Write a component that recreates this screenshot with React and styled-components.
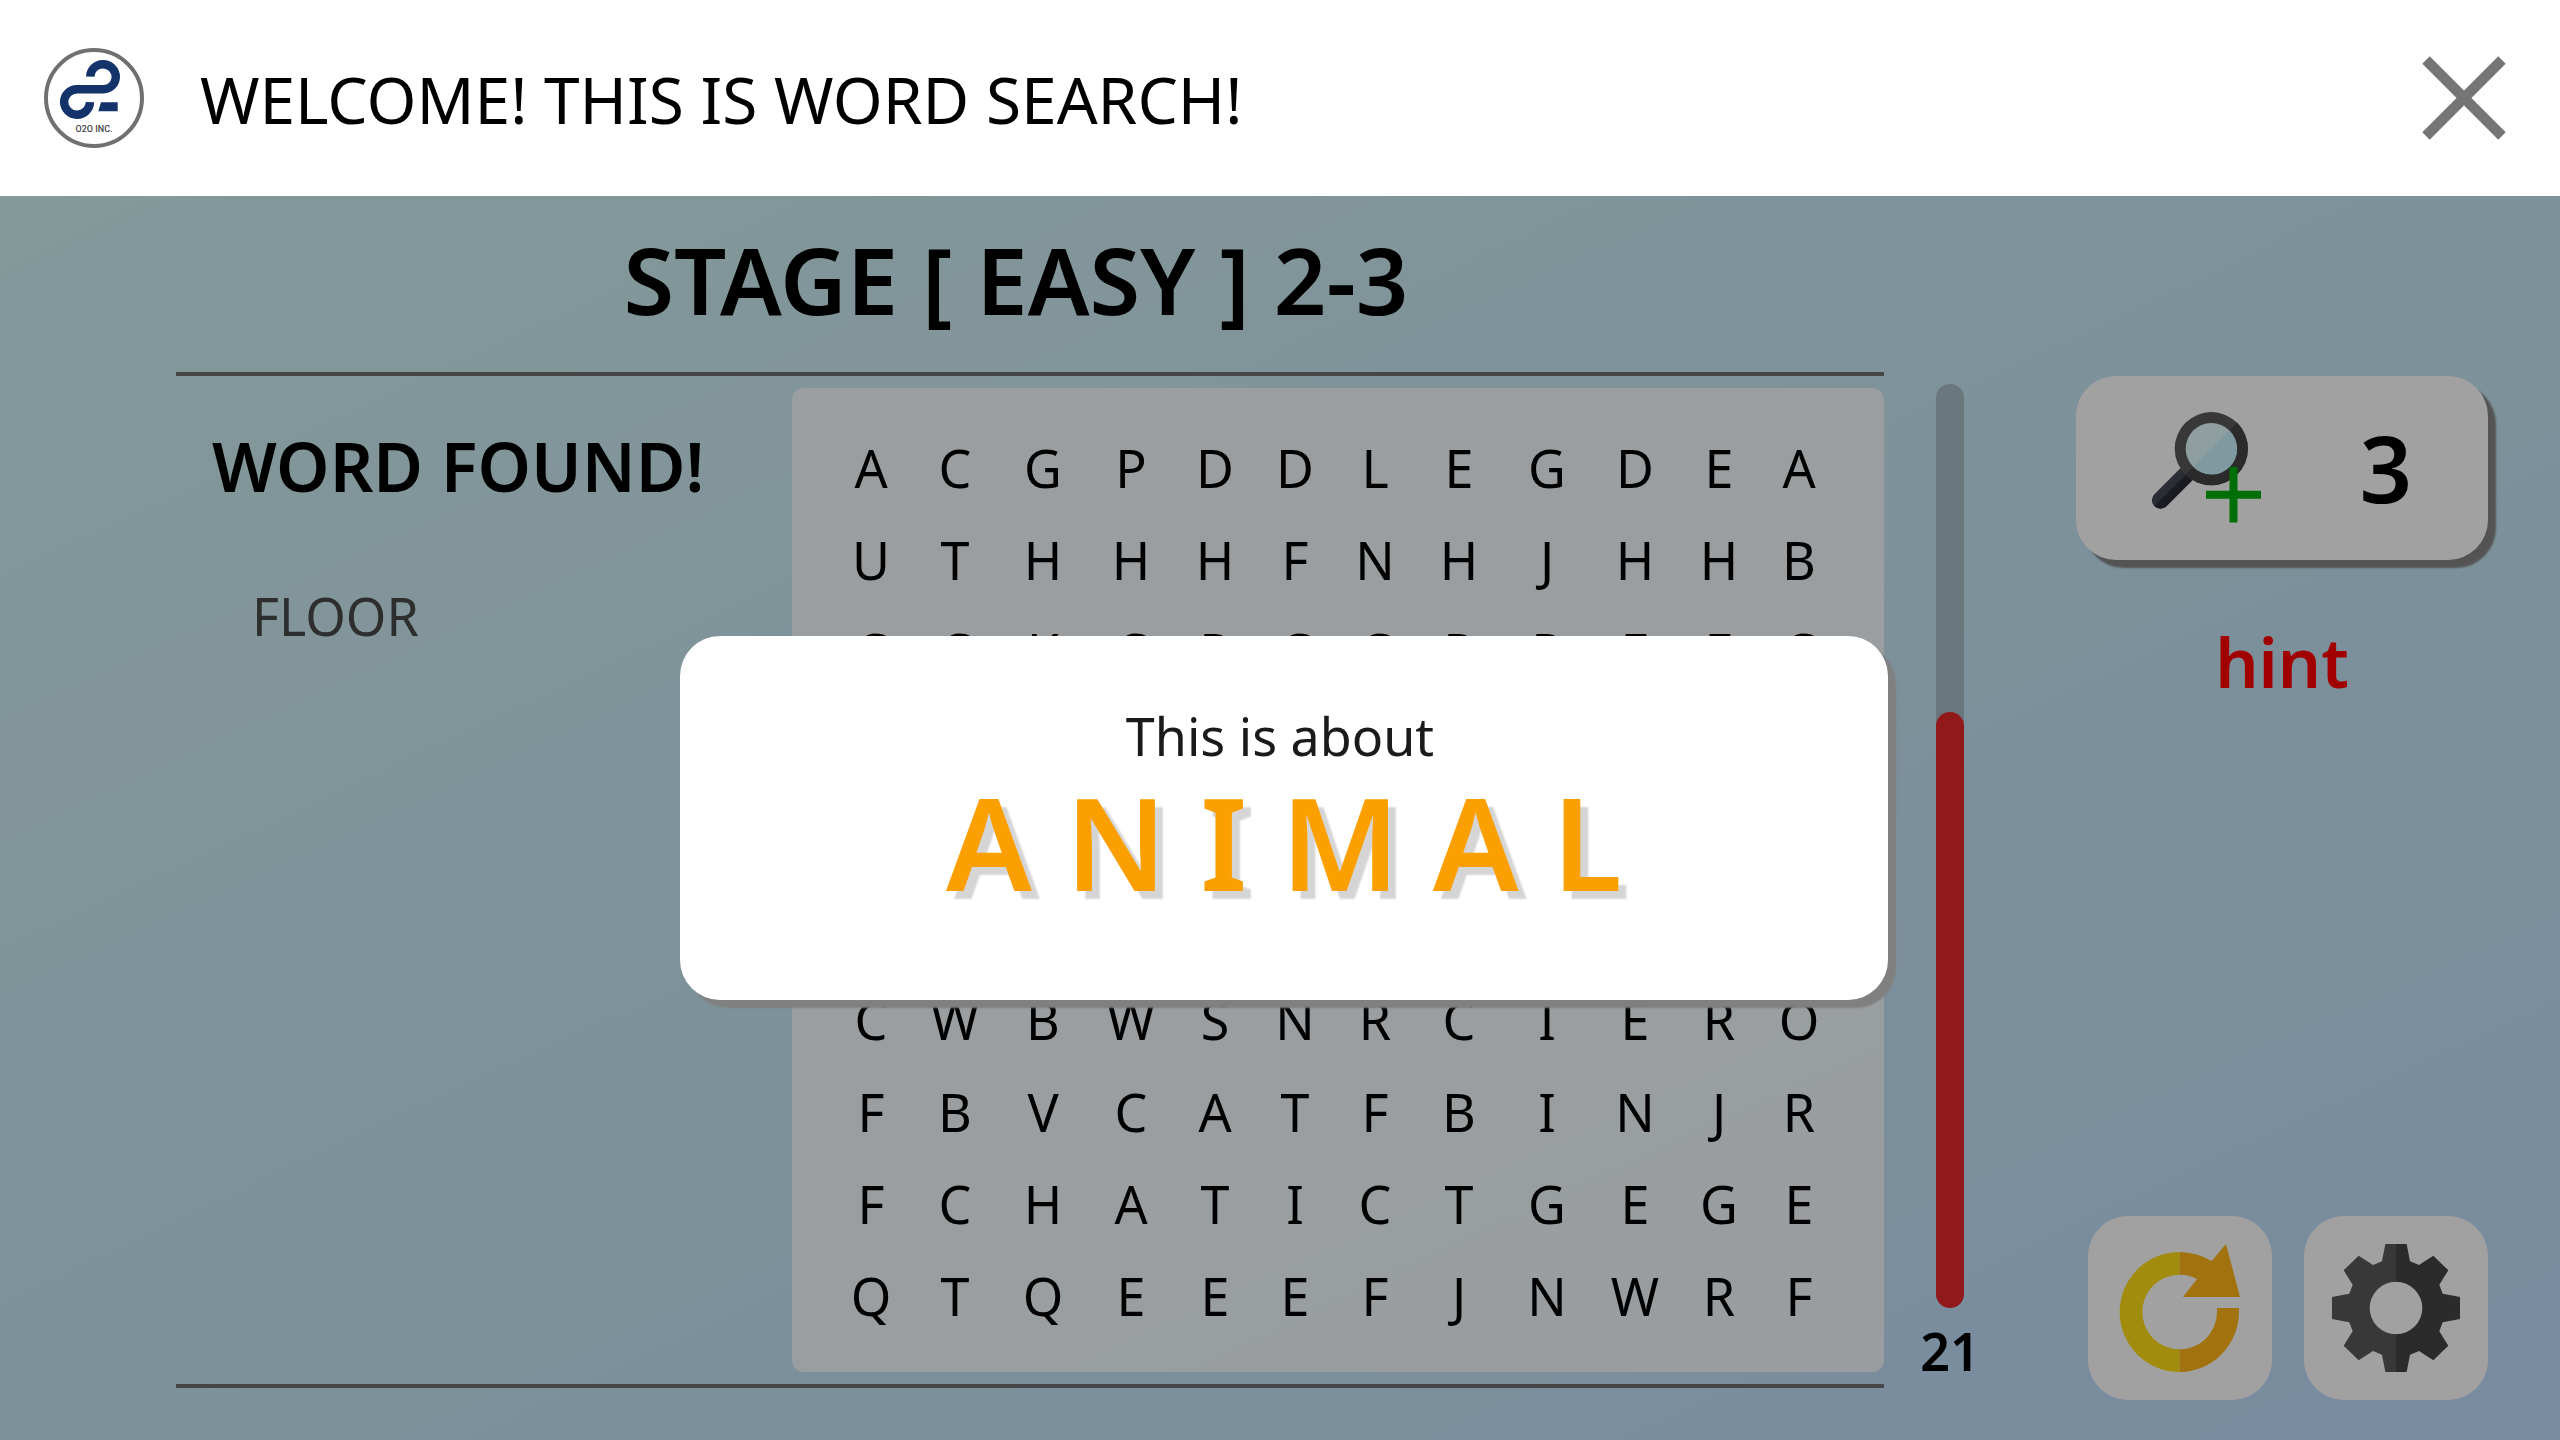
import React from "react";
import styled, { createGlobalStyle } from "styled-components";

const GlobalStyle = createGlobalStyle`
  *, *::before, *::after { box-sizing: border-box; }
  body {
    margin: 0;
    color: #000;
    font-family: "Noto Sans", "Open Sans", sans-serif;
  }
  h1, h2, p, ul { margin: 0; padding: 0; }
  button { font: inherit; color: inherit; border: 0; cursor: pointer; }
`;

const Page = styled.div`
  display: flex;
  flex-direction: column;
  min-height: 100vh;
`;

const Header = styled.header`
  display: flex;
  align-items: center;
  height: 196px;
  padding: 0 46px 0 44px;
  background: #fff;
`;

const LogoSvg = styled.svg`
  width: 100px;
  height: 100px;
  flex: none;
`;

const LogoText = styled.text`
  font-family: Roboto, sans-serif;
  font-size: 9px;
  font-weight: 500;
  fill: #444;
`;

const HeaderTitle = styled.h1`
  flex: 1;
  margin-left: 56px;
  padding-top: 4px;
  font-size: 64px;
  line-height: 88px;
  font-weight: 400;
`;

const CloseButton = styled.button`
  display: flex;
  padding: 4px;
  background: none;

  svg { width: 92px; height: 92px; }
`;

const Stage = styled.main`
  position: relative;
  flex: 1;
  display: grid;
  grid-template-columns: 1fr 192px 412px;
  padding: 0 72px 0 176px;
  background: linear-gradient(155deg, #d1f2f4, #c6e6f4 55%, #c0ddfd);
`;

const Play = styled.section`
  display: flex;
  flex-direction: column;
  padding-bottom: 52px;
`;

const StageTitle = styled.h2`
  height: 176px;
  padding-right: 28px;
  font-size: 92px;
  line-height: 168px;
  font-weight: 600;
  text-align: center;
`;

const Field = styled.div`
  flex: 1;
  display: grid;
  grid-template-columns: 22fr 39fr;
  border-top: 4px solid #707070;
  border-bottom: 4px solid #707070;
`;

const Found = styled.section`
  padding: 40px 0 0 36px;
`;

const FoundTitle = styled.h2`
  font-size: 68px;
  line-height: 100px;
  font-weight: 600;
  white-space: nowrap;
`;

const FoundList = styled.ul`
  margin-top: 64px;
  padding-left: 40px;
  list-style: none;
  font-size: 52px;
  line-height: 72px;
  color: #494949;
`;

const Board = styled.div`
  margin: 12px 0;
  padding: 34px 46px 30px 38px;
  border-radius: 12px;
  background: rgba(255, 255, 255, 0.8);
`;

const Letters = styled.table`
  width: 100%;
  table-layout: fixed;
  border-collapse: collapse;
  font-size: 52px;
  line-height: 72px;
`;

const Column = styled.col`
  width: ${(p) => p.$width}px;
`;

const Letter = styled.td`
  height: 92px;
  padding: 0;
  text-align: center;
`;

const Timer = styled.section`
  display: flex;
  flex-direction: column;
  align-items: center;
  width: 64px;
  margin-left: 34px;
  padding: 188px 0 46px;
`;

const TimerTrack = styled.div`
  flex: 1;
  display: flex;
  align-items: flex-end;
  width: 28px;
  border-radius: 14px;
  background: rgba(112, 112, 112, 0.35);
`;

const TimerFill = styled.div`
  width: 100%;
  border-radius: 14px;
  background: #e8292c;
`;

const TimerValue = styled.p`
  font-size: 52px;
  line-height: 86px;
  font-weight: 600;
`;

const Side = styled.aside`
  display: flex;
  flex-direction: column;
  padding: 180px 0 40px;
`;

const HintButton = styled.button`
  display: flex;
  align-items: center;
  justify-content: space-between;
  height: 184px;
  padding: 0 76px;
  border-radius: 40px;
  background: #fff;
  box-shadow: 8px 8px 2px #848484;
  font-size: 92px;
  line-height: 124px;
  font-weight: 600;

  svg { width: 112px; height: 112px; }
`;

const HintLabel = styled.p`
  margin-top: 52px;
  font-size: 68px;
  line-height: 100px;
  font-weight: 600;
  text-align: center;
  color: #ff0000;
`;

const Tools = styled.div`
  display: flex;
  justify-content: flex-end;
  gap: 32px;
  margin-top: auto;
`;

const ToolButton = styled.button`
  display: flex;
  align-items: center;
  justify-content: center;
  width: 184px;
  height: 184px;
  padding: 0;
  border-radius: 40px;
  background: #fff;

  svg { width: 128px; height: 128px; }
`;

const Overlay = styled.div`
  position: absolute;
  inset: 0;
  display: flex;
  align-items: center;
  justify-content: center;
  padding-left: 8px;
  background: rgba(0, 0, 0, 0.37);
`;

const Popup = styled.div`
  width: 1208px;
  max-width: 90%;
  padding: 64px 0 88px;
  border-radius: 40px;
  background: #fff;
  box-shadow: 8px 8px 2px #808080;
  text-align: center;
`;

const PopupLead = styled.p`
  padding-right: 8px;
  font-size: 52px;
  line-height: 72px;
  color: #1a1a1a;
`;

const PopupTopic = styled.p`
  font-size: 128px;
  line-height: 140px;
  font-weight: 600;
  color: #fc9f00;
  text-shadow: 8px 8px 2px #d5d5d5;
`;

const COLUMN_WIDTHS = [82, 86, 90, 86, 82, 78, 82, 86, 90, 86, 82, 78];

// Rows of spaces stay blank while the topic popup covers them.
const BLANK_ROW = " ".repeat(12);

const ROWS = [
  "ACGPDDLEGDEA",
  "UTHHHFNHJHHB",
  "CCKCPCCPPEEC",
  BLANK_ROW,
  BLANK_ROW,
  BLANK_ROW,
  "CWBWSNRCIERO",
  "FBVCATFBINJR",
  "FCHATICTGEGE",
  "QTQEEEFJNWRF",
];

const FOUND_WORDS = ["FLOOR"];
const TIME_LEFT_PERCENT = 64.5;

function Logo() {
  return (
    <LogoSvg viewBox="0 0 100 100" role="img" aria-label="O2O INC.">
      <circle cx="50" cy="50" r="48" fill="#fff" stroke="#707070" strokeWidth="4" />
      <path
        d="M46.2 28.7A12.8 12.8 0 0 1 59 16.2A12.8 12.8 0 0 1 71.8 29A12.3 12.3 0 0 1 59.5 41.2H33A12.9 12.9 0 0 0 20.1 54A12.9 12.9 0 0 0 33 66.7A12.9 12.9 0 0 0 46 54.2"
        fill="none"
        stroke="#14336b"
        strokeWidth="8.4"
      />
      <path d="M57 54.3H73.7V63.3H54.3Z" fill="#14336b" />
      <LogoText x="50" y="84" textAnchor="middle">O2O INC.</LogoText>
    </LogoSvg>
  );
}

function CloseIcon() {
  return (
    <svg viewBox="0 0 92 92" aria-hidden="true">
      <path d="M8 8L84 84M84 8L8 84" stroke="#757575" strokeWidth="10.5" />
    </svg>
  );
}

function HintIcon() {
  return (
    <svg viewBox="0 0 112 112" aria-hidden="true">
      <path d="M28.4 56.2L40.4 68.2L14.4 94.2A8.4 8.4 0 0 1 2.4 82.2Z" fill="#434851" />
      <path d="M34.4 62.2L40.4 68.2L14.4 94.2A8.4 8.4 0 0 1 2.5 94.1Z" fill="#2b2d36" />
      <circle cx="59.3" cy="36.7" r="36.6" fill="#5a5a5a" />
      <path d="M85.2 10.8A36.6 36.6 0 1 1 33.4 62.6Z" fill="#444" />
      <circle cx="59.3" cy="36.7" r="25.6" fill="#e3fbfc" />
      <path d="M77.4 18.6A25.6 25.6 0 1 1 41.2 54.8Z" fill="#c8f4fe" />
      <path d="M54 82.8H109M81.5 55V110.5" stroke="#00b00d" strokeWidth="8" />
    </svg>
  );
}

function RestartIcon() {
  return (
    <svg viewBox="0 0 384 384" aria-hidden="true">
      <path d="M191 24A180 180 0 0 0 191 384V316A112 112 0 0 1 191 92Z" fill="#ffde17" />
      <path d="M191 24Q245 26 287 51L330 0L372 159H201L243 105Q220 92 191 92Z" fill="#ffb517" />
      <path d="M369 192H303V204A112 112 0 0 1 191 316V384A180 180 0 0 0 369 204Z" fill="#ffb517" />
    </svg>
  );
}

function GearIcon() {
  return (
    <svg viewBox="0 0 384 384" aria-hidden="true">
      <path
        d="M192 0H160L150 52L123 63L80 35L35 79L62 122L52 149L0 159V225L52 235L62 262L35 305L80 349L123 321L150 332L160 384H192V271A79 79 0 0 1 192 113Z"
        fill="#5a5a5a"
      />
      <path
        d="M192 0H224L234 52L261 63L304 35L349 79L322 122L332 149L384 159V225L332 235L322 262L349 305L304 349L261 321L234 332L224 384H192V271A79 79 0 0 0 192 113Z"
        fill="#444"
      />
    </svg>
  );
}

export default function App() {
  return (
    <>
      <GlobalStyle />
      <Page>
        <Header>
          <Logo />
          <HeaderTitle>WELCOME! THIS IS WORD SEARCH!</HeaderTitle>
          <CloseButton type="button" aria-label="Close">
            <CloseIcon />
          </CloseButton>
        </Header>
        <Stage>
          <Play>
            <StageTitle>STAGE [ EASY ] 2-3</StageTitle>
            <Field>
              <Found>
                <FoundTitle>WORD FOUND!</FoundTitle>
                <FoundList>
                  {FOUND_WORDS.map((word) => (
                    <li key={word}>{word}</li>
                  ))}
                </FoundList>
              </Found>
              <Board>
                <Letters>
                  <colgroup>
                    {COLUMN_WIDTHS.map((width, i) => (
                      <Column key={i} $width={width} />
                    ))}
                  </colgroup>
                  <tbody>
                    {ROWS.map((row, rowIndex) => (
                      <tr key={rowIndex}>
                        {row.split("").map((letter, i) => (
                          <Letter key={i}>{letter.trim()}</Letter>
                        ))}
                      </tr>
                    ))}
                  </tbody>
                </Letters>
              </Board>
            </Field>
          </Play>
          <Timer>
            <TimerTrack role="progressbar" aria-label="Time left" aria-valuenow={21}>
              <TimerFill style={{ height: `${TIME_LEFT_PERCENT}%` }} />
            </TimerTrack>
            <TimerValue>21</TimerValue>
          </Timer>
          <Side>
            <HintButton type="button" aria-label="Use a hint, 3 left">
              <HintIcon />
              <span>3</span>
            </HintButton>
            <HintLabel>hint</HintLabel>
            <Tools>
              <ToolButton type="button" aria-label="Restart">
                <RestartIcon />
              </ToolButton>
              <ToolButton type="button" aria-label="Settings">
                <GearIcon />
              </ToolButton>
            </Tools>
          </Side>
          <Overlay>
            <Popup role="dialog" aria-label="Topic">
              <PopupLead>This is about</PopupLead>
              <PopupTopic>A N I M A L</PopupTopic>
            </Popup>
          </Overlay>
        </Stage>
      </Page>
    </>
  );
}
